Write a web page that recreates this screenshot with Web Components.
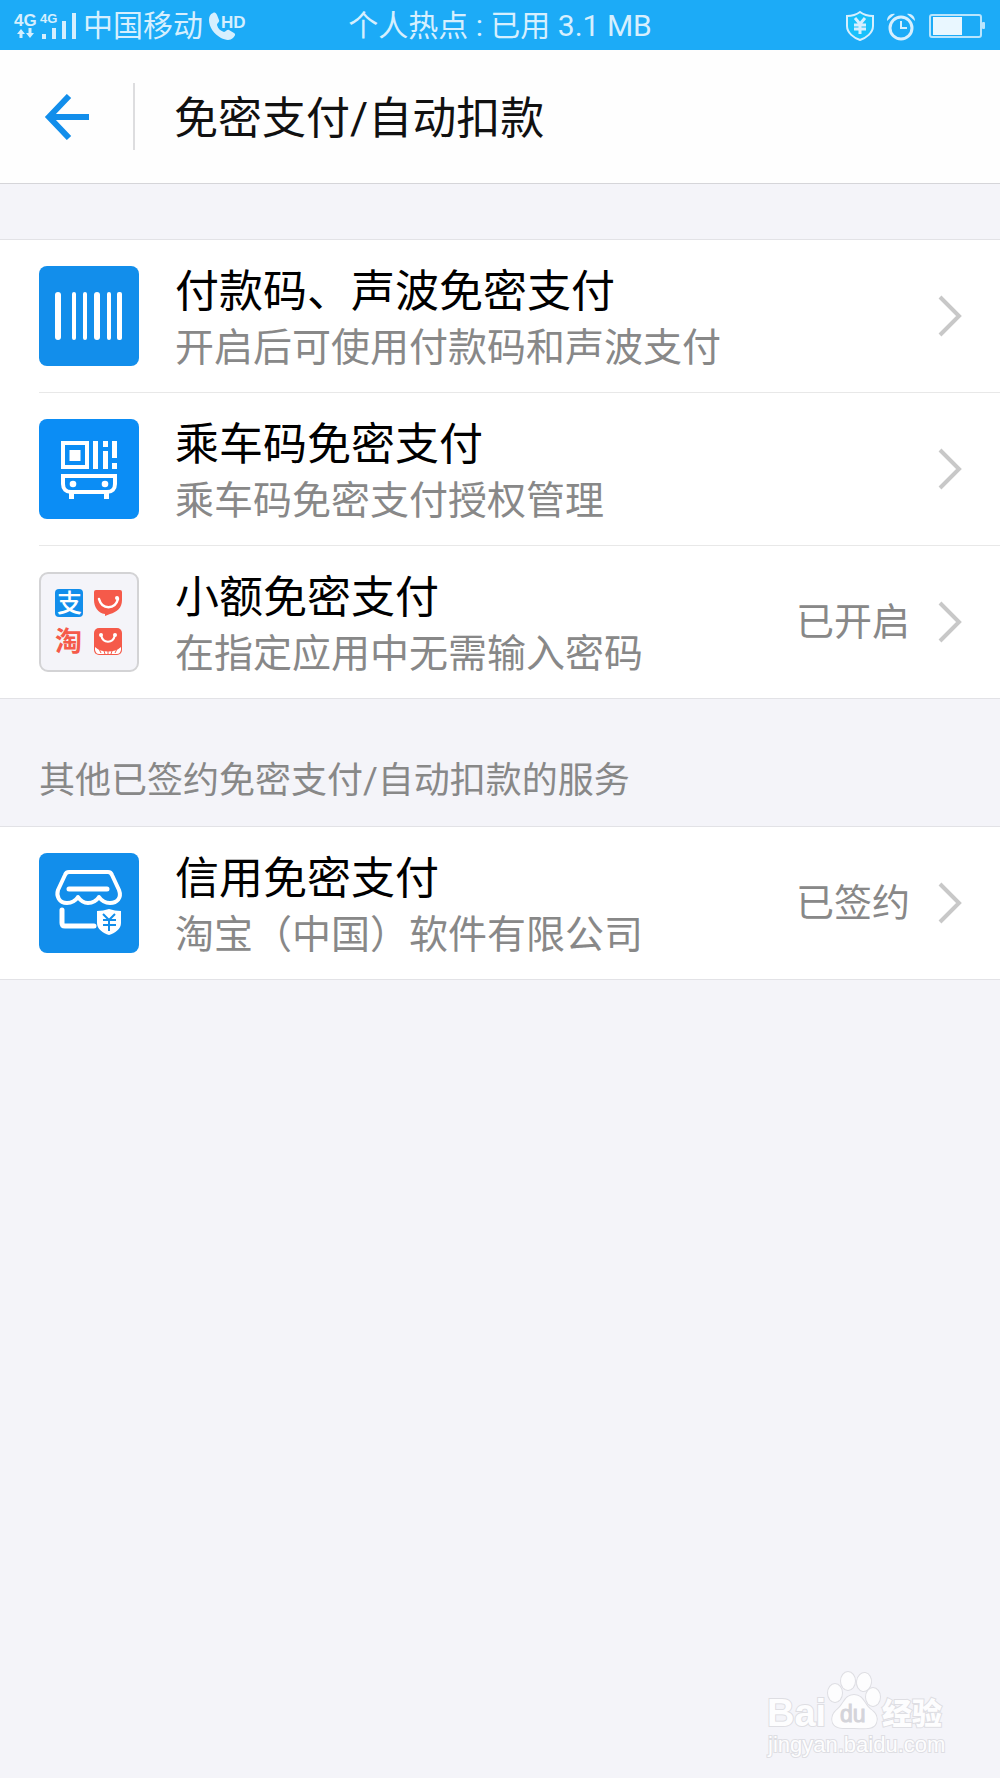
<!DOCTYPE html>
<html lang="zh-CN">
<head>
<meta charset="utf-8">
<meta name="viewport" content="width=device-width, initial-scale=1">
<title>免密支付/自动扣款</title>
<style>
  body {
    margin: 0;
    background: #f4f4f9;
    font-family: Roboto, "Noto Sans CJK SC", sans-serif;
  }
</style>
</head>
<body>
<payment-page>
  <status-bar slot="status" carrier="中国移动">个人热点 : 已用 3.1 MB</status-bar>
  <title-bar slot="header">免密支付/自动扣款</title-bar>

  <service-list>
    <service-row>
      <service-icon slot="icon" name="barcode"></service-icon>
      付款码、声波免密支付
      <span slot="detail">开启后可使用付款码和声波支付</span>
    </service-row>
    <service-row>
      <service-icon slot="icon" name="bus"></service-icon>
      乘车码免密支付
      <span slot="detail">乘车码免密支付授权管理</span>
    </service-row>
    <service-row>
      <service-icon slot="icon" name="apps"></service-icon>
      小额免密支付
      <span slot="detail">在指定应用中无需输入密码</span>
      <span slot="state">已开启</span>
    </service-row>
  </service-list>

  <service-list>
    <span slot="heading">其他已签约免密支付/自动扣款的服务</span>
    <service-row>
      <service-icon slot="icon" name="shop"></service-icon>
      信用免密支付
      <span slot="detail">淘宝（中国）软件有限公司</span>
      <span slot="state">已签约</span>
    </service-row>
  </service-list>

  <site-mark slot="footer"></site-mark>
</payment-page>

<template id="payment-page">
  <style>
    :host {
      display: flex;
      flex-direction: column;
      min-height: 100vh;
    }

    main {
      padding-top: 55px;
    }

    footer {
      display: flex;
      justify-content: flex-end;
      margin-top: auto;
      padding: 0 52px 18px 0;
    }
  </style>
  <slot name="status"></slot>
  <slot name="header"></slot>
  <main><slot></slot></main>
  <footer><slot name="footer"></slot></footer>
</template>

<template id="status-bar">
  <style>
    :host {
      display: grid;
      grid-template-columns: 1fr auto 1fr;
      align-items: center;
      height: 50px;
      padding: 0 14px;
      background: #1cabf7;
      color: #d6effe;
      font-size: 30px;
      line-height: 52px;
      white-space: nowrap;
    }

    .side {
      display: flex;
      align-items: center;
      gap: 6px;
    }

    .right {
      justify-content: flex-end;
      gap: 12px;
    }

    svg {
      display: block;
      flex: none;
    }

    svg text {
      font-family: "Liberation Sans", sans-serif;
      font-weight: bold;
    }
  </style>
  <div class="side">
    <svg width="63" height="50" viewBox="0 0 63 50" fill="#d6effe">
      <text x="0" y="25" font-size="17">4G</text>
      <text x="26" y="22" font-size="13">4G</text>
      <path d="M7 28l4 5H8.500v4h-3v-4H3zM16 37l-4-5h2.500v-5h3v5H20z"/>
      <path d="M28 33h4v5h-4zM38 27h4v11h-4zM48 20h4v18h-4zM58 12h4v26h-4z"/>
    </svg>
    <span id="carrier"></span>
    <svg width="40" height="50" viewBox="0 0 40 50" fill="#d6effe">
      <path d="M4 12c2-1 3 0 4 2l2 5c1 2-2 3-2 5 1 4 4 6 7 7 2 0 3-3 5-2l5 3c2 1 1 3-1 5-3 3-8 2-12 0C5 33 0 26 0 19c0-3 1-6 4-7z"/>
      <text x="12" y="27" font-size="17">HD</text>
    </svg>
  </div>
  <slot></slot>
  <div class="side right">
    <svg width="30" height="50" viewBox="0 0 30 50" fill="none" stroke="#d6effe" stroke-width="2">
      <path d="M15 11c4 3 8 4 13 4v10c0 7-7 12-13 14C9 37 2 32 2 25V15c5 0 9-1 13-4z" fill="#18c0fb"/>
      <path d="M10 17l5 6 5-6M9 24h12M9 28h12M15 23v10" stroke-width="3"/>
    </svg>
    <svg width="30" height="50" viewBox="0 0 30 50" fill="none" stroke="#d6effe">
      <circle cx="14" cy="27" r="11" stroke-width="3"/>
      <path d="M14 20v7h6" stroke-width="2"/>
      <path d="M0 20c0-5 4-8 8-7zM28 20c0-5-4-8-8-7z" fill="#d6effe" stroke="none"/>
    </svg>
    <svg width="57" height="50" viewBox="0 0 57 50" fill="none" stroke="#b9e5fd">
      <rect x="1" y="14" width="51" height="22" rx="2" stroke-width="2"/>
      <path d="M4 16h29v18H4z" fill="#e9f7ff" stroke="none"/>
      <rect x="53" y="21" width="3" height="7" rx="1" fill="#b9e5fd" stroke="none"/>
    </svg>
  </div>
</template>

<template id="title-bar">
  <style>
    :host {
      display: flex;
      align-items: center;
      height: 133px;
      background: #fefefe;
      border-bottom: 1px solid #d5d5d9;
    }

    button {
      display: flex;
      align-items: center;
      justify-content: center;
      box-sizing: border-box;
      width: 135px;
      height: 67px;
      padding: 0;
      border: none;
      border-right: 2px solid #dddddf;
      background: none;
    }

    h1 {
      margin: 0;
      padding: 4px 39px 0;
      color: #111;
      font-size: 44px;
      font-weight: normal;
      line-height: 60px;
    }
  </style>
  <button type="button" aria-label="返回">
    <svg width="46" height="46" viewBox="0 0 46 46" fill="none" stroke="#128eeb" stroke-width="6">
      <path d="M25 2L5 23l20 21M5 23h40"/>
    </svg>
  </button>
  <h1><slot></slot></h1>
</template>

<template id="service-list">
  <style>
    :host {
      display: block;
    }

    h2 {
      margin: 0;
      padding: 57px 39px 19px;
      color: #888;
      font-size: 36px;
      font-weight: normal;
      line-height: 51px;
    }

    h2[hidden] {
      display: none;
    }

    .rows {
      background: #fff;
      border: solid #e2e2e6;
      border-width: 1px 0;
    }
  </style>
  <h2><slot name="heading"></slot></h2>
  <div class="rows"><slot></slot></div>
</template>

<template id="service-row">
  <style>
    :host {
      display: block;
      padding-left: 39px;
    }

    a {
      display: flex;
      align-items: center;
      gap: 36px;
      height: 152px;
      padding-right: 38px;
      color: #000;
      text-decoration: none;
    }

    :host(:not(:first-of-type)) a {
      border-top: 1px solid #e8e8e8;
    }

    .text {
      flex: 1;
      min-width: 0;
      padding-top: 8px;
    }

    .name {
      font-size: 44px;
      line-height: 56px;
    }

    .detail {
      color: #888;
      font-size: 39px;
      line-height: 56px;
    }

    .state {
      display: flex;
      align-items: center;
      gap: 28px;
      color: #888;
      font-size: 38px;
      line-height: 52px;
    }
  </style>
  <a href="#">
    <slot name="icon"></slot>
    <div class="text">
      <div class="name"><slot></slot></div>
      <div class="detail"><slot name="detail"></slot></div>
    </div>
    <div class="state">
      <slot name="state"></slot>
      <svg width="24" height="42" viewBox="0 0 24 42" fill="none" stroke="#c8c8c8" stroke-width="4">
        <path d="M2 2l19 19L2 40"/>
      </svg>
    </div>
  </a>
</template>

<template id="site-mark">
  <style>
    :host {
      display: block;
    }

    svg {
      display: block;
    }

    .white {
      fill: #fdfdfe;
      stroke: #dedee3;
      stroke-width: 2;
      paint-order: stroke;
    }

    text {
      font-family: "Liberation Sans", "Noto Sans CJK SC", sans-serif;
    }
  </style>
  <svg width="182" height="92" viewBox="0 0 182 92">
    <text class="white" x="1" y="58" font-size="38" font-weight="bold">Bai</text>
    <g class="white">
      <ellipse cx="69" cy="25" rx="7" ry="9"/>
      <ellipse cx="82" cy="13" rx="7" ry="9"/>
      <ellipse cx="98" cy="14" rx="7" ry="9" transform="rotate(8 98 14)"/>
      <ellipse cx="107" cy="29" rx="7" ry="9"/>
      <path d="M88 27c9 0 10 9 16 14 6 4 8 9 6 14-3 7-12 5-22 5s-18 1-21-5c-2-5 0-10 5-14 6-5 7-14 16-14z"/>
    </g>
    <text x="74" y="54" font-size="23" fill="#d4d4da" stroke="#d4d4da">du</text>
    <text class="white" x="116" y="56" font-size="30" font-weight="900">经验</text>
    <text class="white" x="2" y="84" font-size="22">jingyan.baidu.com</text>
  </svg>
</template>

<script>
/*
 * Drawings of the service icons, each on a 100 x 100 tile.
 */
const icons = {
  barcode: `
    <rect width="100" height="100" rx="8" fill="#128eeb"/>
    <g fill="#fff">
      <rect x="16" y="26" width="6" height="48" rx="3"/>
      <rect x="33" y="26" width="4" height="48" rx="2"/>
      <rect x="44" y="26" width="4" height="48" rx="2"/>
      <rect x="55" y="26" width="6" height="48" rx="3"/>
      <rect x="68" y="26" width="4" height="48" rx="2"/>
      <rect x="78" y="26" width="5" height="48" rx="2"/>
    </g>`,
  bus: `
    <rect width="100" height="100" rx="8" fill="#0b8df5"/>
    <path d="M24 24h24v24H24z" fill="none" stroke="#fff" stroke-width="4"/>
    <path d="M30.500 31h11v11h-11zM54 22h5v28h-5zM64 22h5v6h-5zM64 32h5v18h-5zM73 22h5v17h-5zM73 44h5v6h-5zM30 74h5v6h-5zM65 74h5v6h-5z" fill="#fff"/>
    <path d="M24 57h52v8c0 5-3 8-8 8H32c-5 0-8-3-8-8z" fill="none" stroke="#fff" stroke-width="4"/>
    <circle cx="34" cy="65" r="3.300" fill="#fff"/>
    <circle cx="66" cy="65" r="3.300" fill="#fff"/>`,
  apps: `
    <rect x="1" y="1" width="98" height="98" rx="8" fill="#f4f4f9" stroke="#d3d3d5" stroke-width="2"/>
    <rect x="16" y="17" width="28" height="28" rx="4" fill="#128eeb"/>
    <text x="18" y="40" font-size="25" font-weight="500" fill="#fff">支</text>
    <path d="M57 18h24q2 0 2 2v8c0 8-5 12-12 14l-5 2v-2c-7-1-11-7-11-14v-8q0-2 2-2z" fill="#f55a4a"/>
    <path d="M60 27c3 11 16 11 19 0" fill="none" stroke="#fff" stroke-width="2.500" stroke-linecap="round"/>
    <circle cx="78" cy="26" r="2" fill="#fff"/>
    <text x="16" y="79" font-size="27" font-weight="bold" fill="#f55a4a">淘</text>
    <rect x="55" y="56" width="28" height="27" rx="5" fill="#f55a4a"/>
    <path d="M62 63c2 9 12 9 14 0" fill="none" stroke="#fff" stroke-width="2"/>
    <circle cx="62" cy="63" r="2" fill="#fff"/>
    <circle cx="76" cy="63" r="2" fill="#fff"/>
    <path d="M56 75c6 6 20 6 26 0v3c-1 3-2 4-4 4H60c-2 0-3-1-4-4z" fill="#fff"/>
    <path d="M60 77l2 4M65 79l1 3M69 79v3M73 79l-1 3M78 77l-2 4" stroke="#f55a4a"/>`,
  shop: `
    <rect width="100" height="100" rx="8" fill="#128eeb"/>
    <g fill="none" stroke="#fff" stroke-width="4" stroke-linecap="round" stroke-linejoin="round">
      <path d="M30 19h39q3 0 4 3l7 15c3 8-2 13-9 13q-7 0-11-6-4 6-11 6-6 0-10-6-4 6-11 6c-8 0-11-7-9-13l7-15q1-3 4-3z"/>
      <path d="M30 36h38M23 57v13q0 3 3 3h29" stroke-width="5"/>
    </g>
    <path d="M70 56c4 1 8 2 12 2v12c0 6-6 10-12 12-6-2-12-6-12-12V58c4 0 8-1 12-2z" fill="#fff"/>
    <path d="M64 61l6 6 6-6M64 67h13M64 72h13M70 67v11" fill="none" stroke="#128eeb" stroke-width="2"/>`
}

/**
 * Attaches a shadow root filled from the template with the given id.
 *
 * @param {HTMLElement} host - The element that gets the shadow root.
 * @param {string} id - The template's id.
 */
function attachTemplate (host, id) {
  host.attachShadow({ mode: 'open' })
    .appendChild(document.getElementById(id).content.cloneNode(true))
}

customElements.define('payment-page',
  class extends HTMLElement {
    constructor () {
      super()
      attachTemplate(this, 'payment-page')
    }
  }
)

customElements.define('status-bar',
  class extends HTMLElement {
    constructor () {
      super()
      attachTemplate(this, 'status-bar')
    }

    connectedCallback () {
      this.shadowRoot.querySelector('#carrier').textContent = this.getAttribute('carrier')
    }
  }
)

customElements.define('title-bar',
  class extends HTMLElement {
    constructor () {
      super()
      attachTemplate(this, 'title-bar')

      this.shadowRoot.querySelector('button').addEventListener('click', () => {
        window.history.back()
      })
    }
  }
)

customElements.define('service-list',
  class extends HTMLElement {
    constructor () {
      super()
      attachTemplate(this, 'service-list')
    }

    /**
     * Hides the heading of a list that has none.
     */
    connectedCallback () {
      this.shadowRoot.querySelector('h2').hidden = !this.querySelector('[slot="heading"]')
    }
  }
)

customElements.define('service-row',
  class extends HTMLElement {
    constructor () {
      super()
      attachTemplate(this, 'service-row')
    }
  }
)

customElements.define('service-icon',
  class extends HTMLElement {
    constructor () {
      super()
      this.attachShadow({ mode: 'open' })
    }

    connectedCallback () {
      this.shadowRoot.innerHTML = `
        <style>
          :host {
            display: block;
            flex: none;
            width: 100px;
            height: 100px;
          }

          svg {
            display: block;
          }
        </style>
        <svg width="100" height="100" viewBox="0 0 100 100">${icons[this.getAttribute('name')]}</svg>`
    }
  }
)

customElements.define('site-mark',
  class extends HTMLElement {
    constructor () {
      super()
      attachTemplate(this, 'site-mark')
    }
  }
)
</script>
</body>
</html>
